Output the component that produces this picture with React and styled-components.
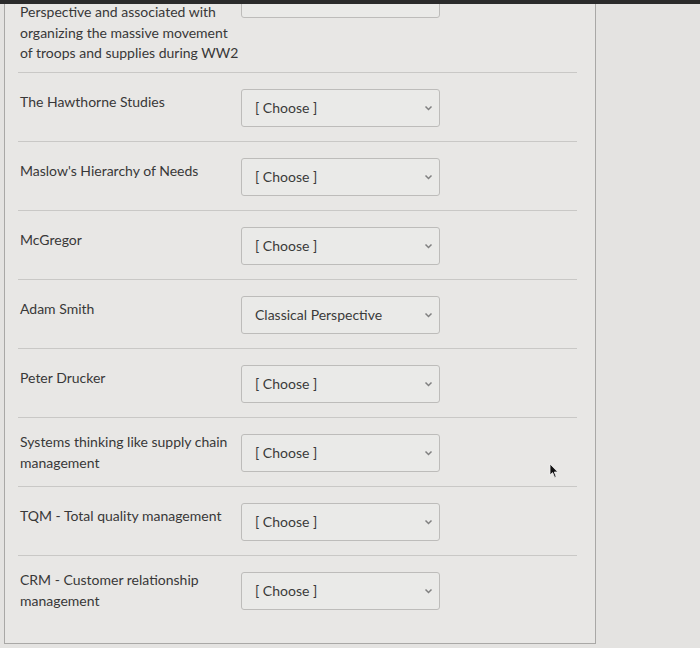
import React from 'react'
import styled, { createGlobalStyle } from 'styled-components'

const GlobalStyle = createGlobalStyle`
  html, body {
    margin: 0;
    padding: 0;
    background: #e4e3e1;
  }

  body {
    font-family: Lato, "Noto Sans", sans-serif;
    color: #363636;
  }
`

const Frame = styled.div`
  position: relative;
  width: 700px;
  height: 648px;
  overflow: hidden;
  background: #e4e3e1;
`

const TopBar = styled.div`
  position: relative;
  z-index: 2;
  height: 4px;
  background: #2b2b2b;
`

const Panel = styled.div`
  margin: -2px 0 0 4px;
  width: 559px;
  padding: 0 18px 19px 13px;
  background: #e8e7e5;
  border: 1px solid #a9a8a6;
  border-top: none;
`

const Row = styled.div`
  display: flex;
  align-items: ${p => (p.$first ? 'flex-start' : 'center')};
  gap: 2px;
  padding: ${p => (p.$first ? '0 0 8px' : '16px 0 14px')};
  border-top: ${p => (p.$first ? 'none' : '1px solid #c9c8c6')};
`

const Label = styled.div`
  width: 219px;
  padding: 0 0 ${p => (p.$lines === 1 ? '10px' : '0')} 2px;
  margin: ${p => (p.$lines === 2 ? '-2px 0' : '0')};
  font-size: 14px;
  line-height: 20.5px;
  color: #383838;
`

const Select = styled.div`
  display: flex;
  align-items: center;
  justify-content: space-between;
  box-sizing: border-box;
  flex: none;
  width: 199px;
  height: 38px;
  margin-top: ${p => (p.$first ? '-22px' : '0')};
  padding: 0 5px 0 13px;
  border: 1px solid #bdbcba;
  border-radius: 3px;
  background: #eaeae8;
  font-size: 14px;
  color: #3a3a3a;

  svg {
    flex: none;
  }
`

const Cursor = styled.svg`
  position: absolute;
  left: 549px;
  top: 463px;
`

const Chevron = () => (
  <svg width="11" height="8" viewBox="0 0 11 8">
    <path d="M2.5 2.5 L5.5 5.5 L8.5 2.5" fill="none" stroke="#808080" strokeWidth="1.5"/>
  </svg>
)

const rows = [
  { label: 'Perspective and associated with organizing the massive movement of troops and supplies during WW2', value: '', lines: 3 },
  { label: 'The Hawthorne Studies', value: '[ Choose ]', lines: 1 },
  { label: "Maslow's Hierarchy of Needs", value: '[ Choose ]', lines: 1 },
  { label: 'McGregor', value: '[ Choose ]', lines: 1 },
  { label: 'Adam Smith', value: 'Classical Perspective', lines: 1 },
  { label: 'Peter Drucker', value: '[ Choose ]', lines: 1 },
  { label: 'Systems thinking like supply chain management', value: '[ Choose ]', lines: 2 },
  { label: 'TQM - Total quality management', value: '[ Choose ]', lines: 1 },
  { label: 'CRM - Customer relationship management', value: '[ Choose ]', lines: 2 },
]

export default function App() {
  return (
    <Frame>
      <GlobalStyle/>
      <TopBar/>
      <Panel>
        {rows.map((r, i) => (
          <Row key={i} $first={i === 0}>
            <Label $lines={r.lines}>{r.label}</Label>
            <Select $first={i === 0}>
              <span>{r.value}</span>
              {r.value ? <Chevron/> : null}
            </Select>
          </Row>
        ))}
      </Panel>
      <Cursor width="10" height="16" viewBox="0 0 10 16">
        <path d="M1 1 L1 12 L3.6 9.6 L5.6 14.4 L7.2 13.7 L5.3 9 L8.8 9 Z" fill="#111" stroke="#f2f2f2" strokeWidth="0.8"/>
      </Cursor>
    </Frame>
  )
}
